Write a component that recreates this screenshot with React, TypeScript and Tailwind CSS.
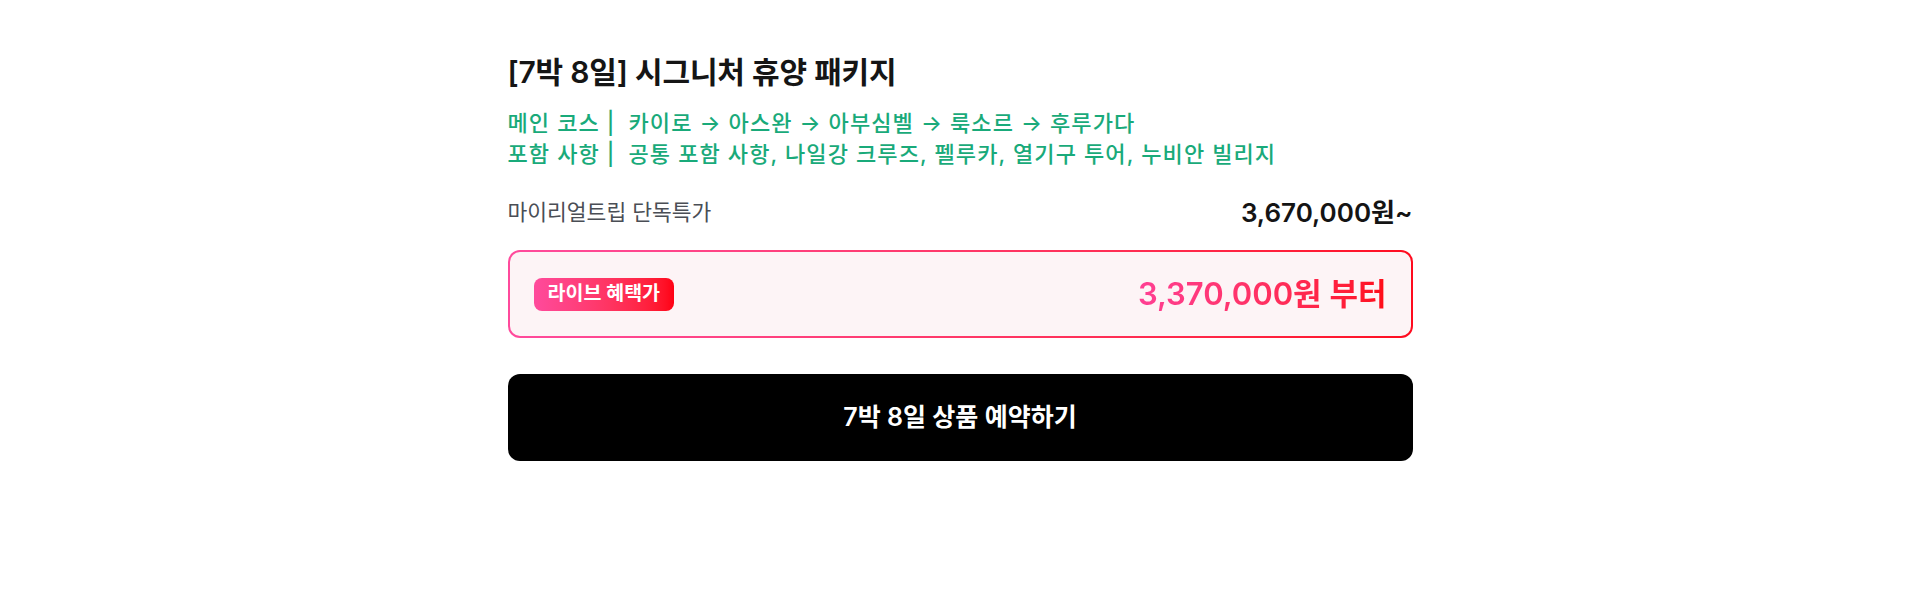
import React from "react";

export default function App() {
  return (
    <div className="min-h-screen w-full bg-white font-['Inter','Noto_Sans_CJK_KR',sans-serif]">
      <div className="mx-auto w-[905px] pt-[52px]">
        <h1 className="text-[30px] leading-[40px] font-semibold text-[#151515] tracking-[-0.2px]">
          [7박 8일] 시그니처 휴양 패키지
        </h1>
        <div className="mt-[16px] text-[22px] leading-[31px] font-medium text-[#19aa7a] tracking-[1.1px]">
          <p className="flex">
            <span>메인 코스 |</span>
            <span className="ml-[13px]">카이로 → 아스완 → 아부심벨 → 룩소르 → 후루가다</span>
          </p>
          <p className="flex">
            <span>포함 사항 |</span>
            <span className="ml-[13px]">공통 포함 사항, 나일강 크루즈, 펠루카, 열기구 투어, 누비안 빌리지</span>
          </p>
        </div>
        <div className="mt-[26px] flex h-[32px] items-center justify-between">
          <span className="text-[21.5px] text-[#4a4e55]">마이리얼트립 단독특가</span>
          <span className="text-[26px] font-semibold text-[#141414]">3,670,000원~</span>
        </div>
        <div className="mt-[22px] rounded-[12px] bg-gradient-to-r from-[#ff4a9c] to-[#ff0a1e] p-[2px]">
          <div className="flex h-[84px] items-center justify-between rounded-[10px] bg-[#fdf4f6] pl-[24px] pr-[24px]">
            <span className="flex h-[33px] items-center rounded-[8px] bg-gradient-to-r from-[#ff4a9c] to-[#ff0012] px-[14px] text-[19.5px] font-semibold text-white">
              라이브 혜택가
            </span>
            <span className="bg-gradient-to-r from-[#ff3f93] to-[#ff0a14] bg-clip-text text-[31px] font-semibold text-transparent">
              3,370,000원 부터
            </span>
          </div>
        </div>
        <button className="mt-[36px] flex h-[87px] w-full items-center justify-center rounded-[12px] bg-black text-[25px] font-semibold text-white">
          7박 8일 상품 예약하기
        </button>
      </div>
    </div>
  );
}
